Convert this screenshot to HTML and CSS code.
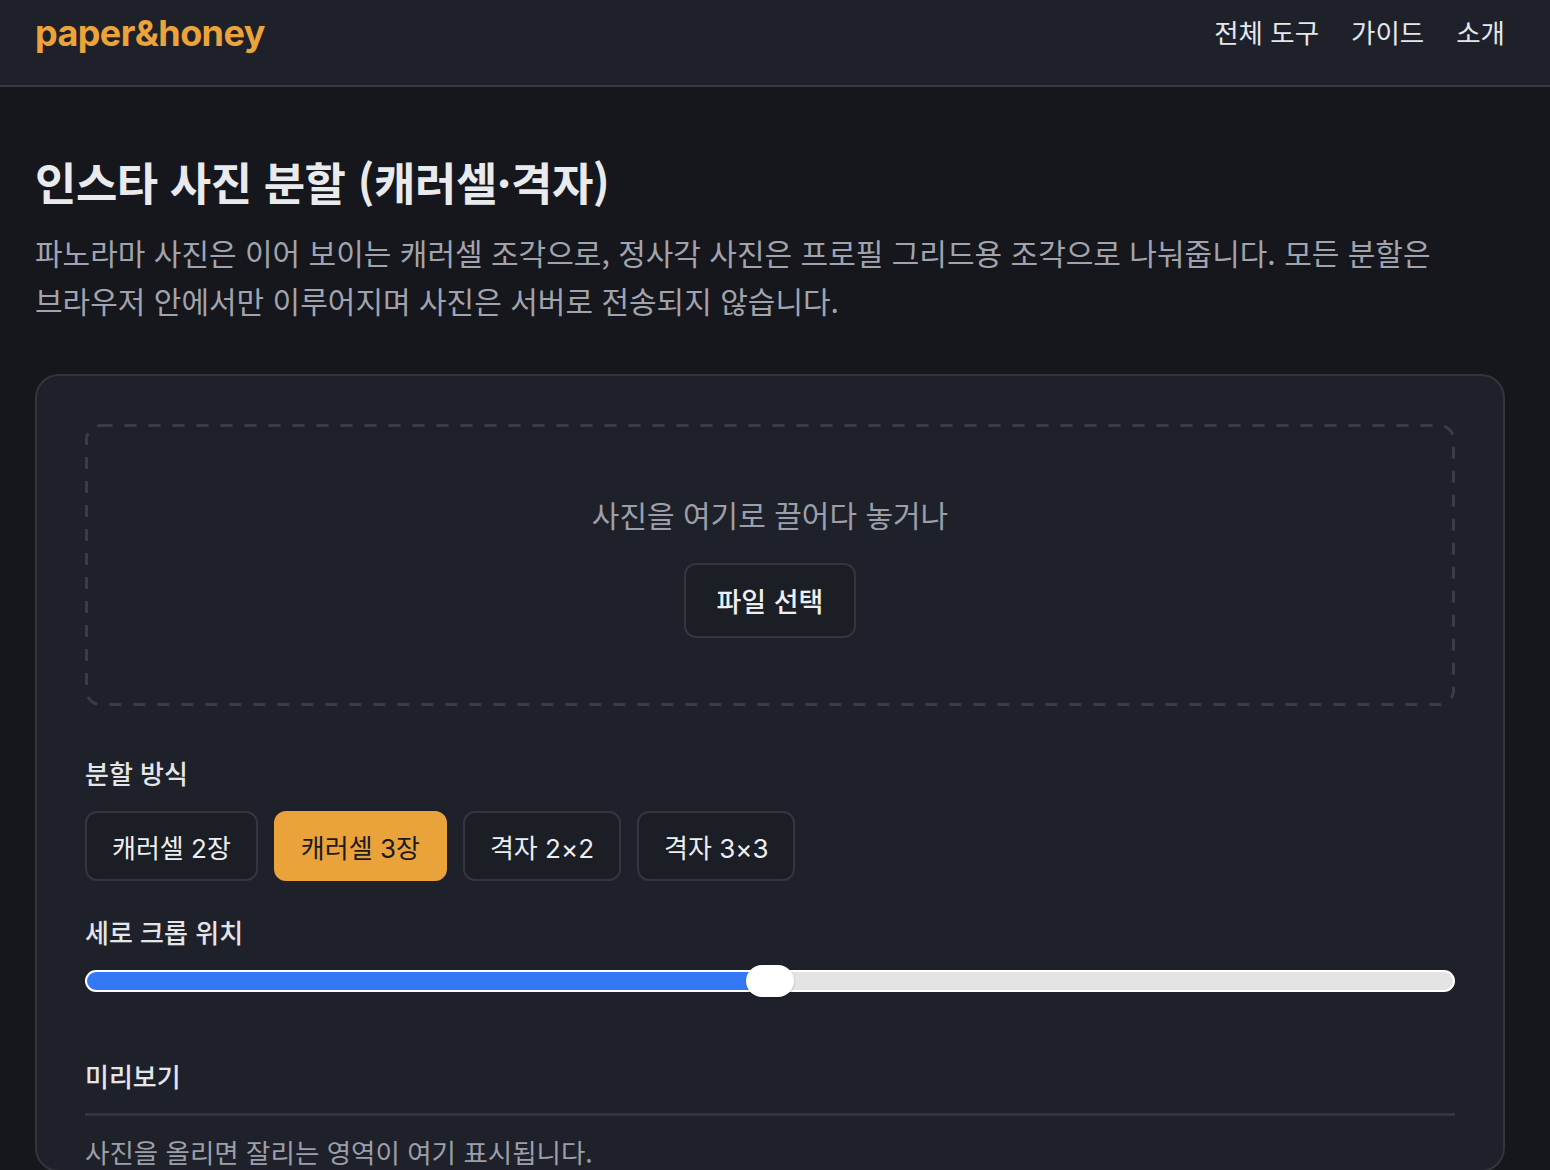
FILE: index.html
```html
<!DOCTYPE html>
<html lang="ko">
<head>
<meta charset="utf-8">
<title>인스타 사진 분할 (캐러셀·격자) - paper&amp;honey</title>
<link rel="stylesheet" href="styles.css">
</head>
<body>
<header class="site-header">
  <a class="logo" href="#">paper&amp;honey</a>
  <nav class="nav">
    <a href="#">전체 도구</a>
    <a href="#">가이드</a>
    <a href="#">소개</a>
  </nav>
</header>
<main class="main">
  <h1 class="title">인스타 사진 분할 (캐러셀·격자)</h1>
  <p class="desc">파노라마 사진은 이어 보이는 캐러셀 조각으로, 정사각 사진은 프로필 그리드용 조각으로 나눠줍니다. 모든 분할은 브라우저 안에서만 이루어지며 사진은 서버로 전송되지 않습니다.</p>
  <section class="card">
    <div class="dropzone">
      <svg class="dash" viewBox="0 0 1370 282" preserveAspectRatio="none" aria-hidden="true">
        <rect x="1.5" y="1.5" width="1367" height="279" rx="14" ry="14" fill="none" stroke="#3a3c45" stroke-width="3" stroke-dasharray="12 12"/>
      </svg>
      <p class="drop-text">사진을 여기로 끌어다 놓거나</p>
      <button class="file-btn" type="button">파일 선택</button>
    </div>
    <h2 class="label label-mode">분할 방식</h2>
    <div class="modes">
      <button class="mode" type="button">캐러셀 2장</button>
      <button class="mode active" type="button">캐러셀 3장</button>
      <button class="mode" type="button">격자 2×2</button>
      <button class="mode" type="button">격자 3×3</button>
    </div>
    <h2 class="label label-crop">세로 크롭 위치</h2>
    <input class="range" type="range" min="0" max="100" value="50">
    <h2 class="label label-preview">미리보기</h2>
    <div class="divider"></div>
    <p class="preview-text">사진을 올리면 잘리는 영역이 여기 표시됩니다.</p>
  </section>
</main>
</body>
</html>
```
FILE: styles.css
```css
* { box-sizing: border-box; }
html, body {
  margin: 0;
  background: #16171c;
  color: #e8e9ed;
  font-family: "Noto Sans CJK KR", "Noto Sans", sans-serif;
  word-break: keep-all;
}
a { color: inherit; text-decoration: none; }

.site-header {
  height: 87px;
  background: #1f212a;
  border-bottom: 2px solid #393b43;
  display: flex;
  justify-content: space-between;
  align-items: flex-start;
  padding: 0 45px 0 35px;
}
.logo {
  font-family: Inter, "Noto Sans", sans-serif;
  font-weight: 700;
  font-size: 36px;
  letter-spacing: -0.6px;
  color: #eba33a;
  line-height: 66px;
}
.nav {
  display: flex;
  gap: 32px;
  line-height: 64px;
}
.nav a {
  font-size: 26.5px;
  color: #e6e7eb;
}

.main {
  padding: 0 45px 0 35px;
}
.title {
  margin: 67px 0 0;
  font-size: 45px;
  line-height: 56px;
  font-weight: 700;
  color: #e9eaee;
  letter-spacing: -0.5px;
}
.desc {
  margin: 18px 0 0;
  font-size: 30px;
  line-height: 48px;
  color: #a1a4ae;
}

.card {
  margin-top: 50px;
  background: #1f212a;
  border: 2px solid #33353d;
  border-radius: 24px;
  padding: 48px 48px 0;
  display: flex;
  flex-direction: column;
}
.dropzone {
  position: relative;
  height: 282px;
  display: flex;
  flex-direction: column;
  align-items: center;
  padding-top: 70px;
}
.dash {
  position: absolute;
  left: 0;
  top: 0;
  width: 100%;
  height: 100%;
}
.drop-text {
  margin: 0;
  font-size: 30px;
  line-height: 40px;
  color: #9c9fa9;
}
.file-btn {
  position: relative;
  flex: none;
  margin-top: 29px;
  width: 172px;
  height: 75px;
  background: #1c1e25;
  border: 2px solid #34363e;
  border-radius: 12px;
  color: #eeeff2;
  font-family: inherit;
  font-size: 27px;
  font-weight: 500;
}

.label {
  margin: 0;
  font-size: 26px;
  line-height: 36px;
  font-weight: 500;
  color: #e4e5e9;
}
.label-mode { margin-top: 49px; }
.label-crop { margin-top: 33px; }
.label-preview { margin-top: 61px; }

.modes {
  display: flex;
  gap: 16px;
  margin-top: 20px;
}
.mode {
  height: 70px;
  padding: 0 25px;
  background: #1c1e25;
  border: 2px solid #34363e;
  border-radius: 12px;
  color: #eeeff2;
  font-family: Inter, "Noto Sans CJK KR", sans-serif;
  font-size: 26px;
}
.mode.active {
  background: #eaa33b;
  border-color: #eaa33b;
  color: #1b1b1e;
}

.range {
  -webkit-appearance: none;
  appearance: none;
  margin: 15px 0 0;
  width: 100%;
  height: 32px;
  background: transparent;
}
.range::-webkit-slider-runnable-track {
  height: 22px;
  border-radius: 11px;
  border: 2px solid #ffffff;
  background: linear-gradient(to right, #3478f6 0, #3478f6 50%, #e4e4e4 50%, #e4e4e4 100%);
}
.range::-webkit-slider-thumb {
  -webkit-appearance: none;
  width: 48px;
  height: 32px;
  margin-top: -7px;
  border-radius: 16px;
  background: #ffffff;
  box-shadow: 0 1px 2px rgba(0,0,0,0.25);
}

.divider {
  margin-top: 19px;
  height: 3px;
  background: #33353d;
}
.preview-text {
  margin: 18px 0 0;
  font-size: 26.5px;
  line-height: 36px;
  color: #9c9fa9;
}
```
